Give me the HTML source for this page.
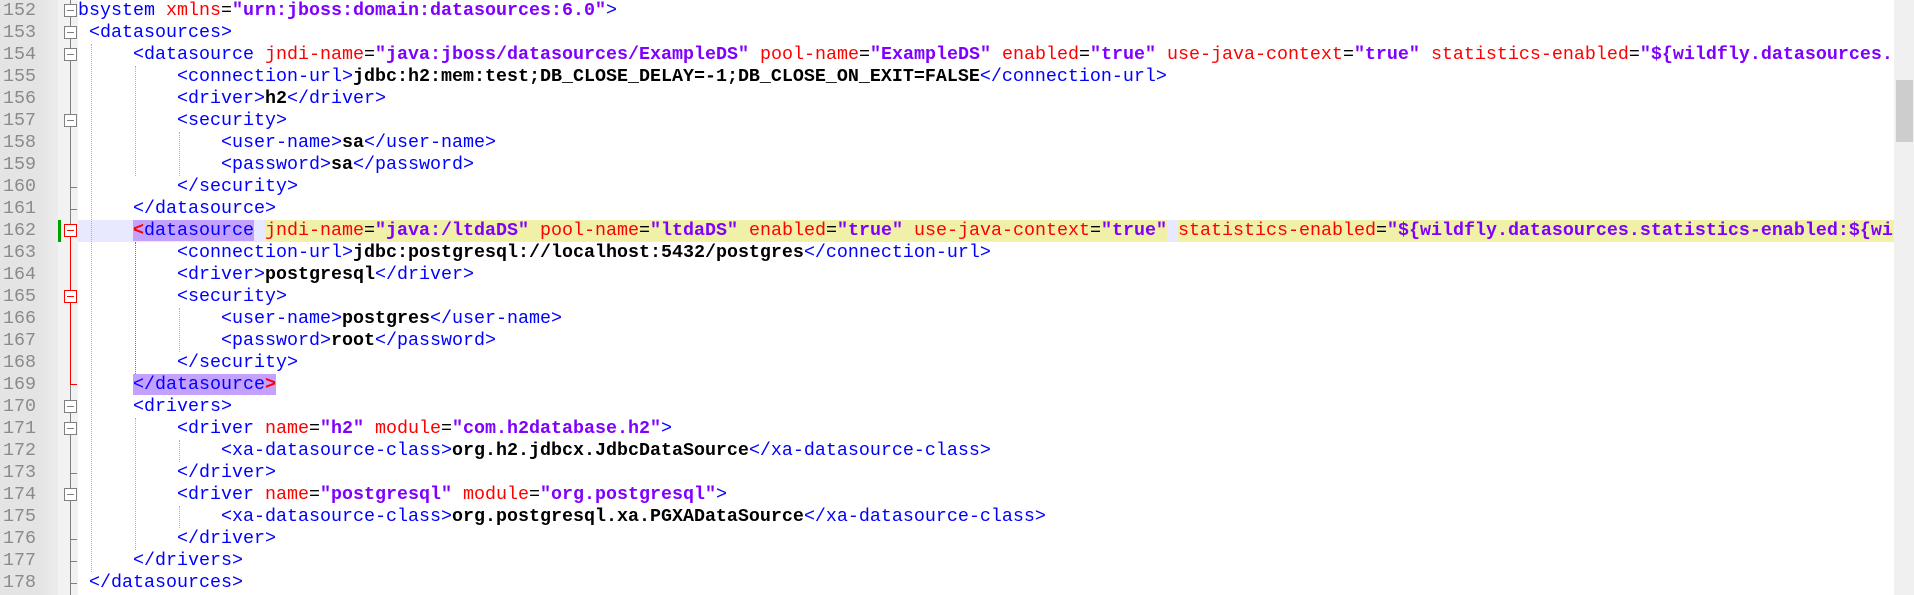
<!DOCTYPE html>
<html><head><meta charset="utf-8"><style>
*{margin:0;padding:0;box-sizing:border-box}
body{width:1914px;height:595px;overflow:hidden;background:#fff;position:relative;font-family:"Liberation Mono",monospace;font-size:18.33px}
.gut{position:absolute;left:0;top:0;width:58px;height:595px;background:linear-gradient(90deg,#e4e4e4 0,#e4e4e4 38px,#ececec 58px)}
.fm{position:absolute;left:58px;top:0;width:20px;height:595px;background:#f2f2f2}
.ln{position:absolute;left:0;width:36px;text-align:right;color:#8a8a8a;height:22px;line-height:22px}
.row{position:absolute;left:78px;right:20px;height:22px;line-height:22px;white-space:pre;color:#000}
.t{color:#0000ff}.a{color:#ff0000}.v{color:#8000ff;font-weight:bold}.b{font-weight:bold}
.box{position:absolute;left:64px;width:13px;height:13px;border:1px solid #808080;background:#fff}
.box:after{content:"";position:absolute;left:2px;right:2px;top:5px;height:1px;background:#808080}
.box.r{border-color:#ff0000}.box.r:after{background:#ff0000}
.vl{position:absolute;left:70px;width:1px;background:#808080}
.tick{position:absolute;left:70px;width:7px;height:1px;background:#808080}
.ig{position:absolute;width:0;border-left:1px dotted #b0b0b0}
.sb{position:absolute;right:0;top:0;width:20px;height:595px;background:#f0f0f0}
.th{position:absolute;right:1px;top:80px;width:17px;height:62px;background:#cdcdcd}
.y{background:#f0f0a8}.p{background:#c4a0ff}
</style></head><body>
<div class="gut"></div><div class="fm"></div>
<div style="position:absolute;left:78px;right:20px;top:220px;height:22px;background:#e8e8ff"></div>
<div style="position:absolute;left:58px;top:220px;width:3px;height:22px;background:#00a000"></div>

<div class="ln" style="top:0">152</div><div class="ln" style="top:22px">153</div><div class="ln" style="top:44px">154</div><div class="ln" style="top:66px">155</div><div class="ln" style="top:88px">156</div><div class="ln" style="top:110px">157</div><div class="ln" style="top:132px">158</div><div class="ln" style="top:154px">159</div><div class="ln" style="top:176px">160</div><div class="ln" style="top:198px">161</div><div class="ln" style="top:220px">162</div><div class="ln" style="top:242px">163</div><div class="ln" style="top:264px">164</div><div class="ln" style="top:286px">165</div><div class="ln" style="top:308px">166</div><div class="ln" style="top:330px">167</div><div class="ln" style="top:352px">168</div><div class="ln" style="top:374px">169</div><div class="ln" style="top:396px">170</div><div class="ln" style="top:418px">171</div><div class="ln" style="top:440px">172</div><div class="ln" style="top:462px">173</div><div class="ln" style="top:484px">174</div><div class="ln" style="top:506px">175</div><div class="ln" style="top:528px">176</div><div class="ln" style="top:550px">177</div><div class="ln" style="top:572px">178</div>

<div class="vl" style="top:0;height:595px"></div>
<div class="vl" style="top:237px;height:148px;background:#ff0000"></div>
<div class="tick" style="top:187px"></div>
<div class="tick" style="top:209px"></div>
<div class="tick" style="top:384px;background:#ff0000"></div>
<div class="tick" style="top:473px"></div><div class="tick" style="top:539px"></div><div class="tick" style="top:561px"></div><div class="tick" style="top:583px"></div>
<div class="box" style="top:4px"></div><div class="box" style="top:26px"></div><div class="box" style="top:48px"></div><div class="box" style="top:114px"></div><div class="box r" style="top:224px"></div><div class="box r" style="top:290px"></div><div class="box" style="top:400px"></div><div class="box" style="top:422px"></div><div class="box" style="top:488px"></div>

<div class="ig" style="left:91px;top:44px;height:528px"></div>
<div class="ig" style="left:135px;top:66px;height:110px"></div>
<div class="ig" style="left:135px;top:242px;height:132px;border-left-color:#ff4040"></div>
<div class="ig" style="left:179px;top:132px;height:44px"></div>
<div class="ig" style="left:179px;top:308px;height:44px"></div>
<div class="ig" style="left:135px;top:418px;height:132px"></div>
<div class="ig" style="left:179px;top:440px;height:22px"></div>
<div class="ig" style="left:179px;top:506px;height:22px"></div>

<div class="row" style="top:0"><span class="t">bsystem </span><span class="a">xmlns</span>=<span class="v">"urn:jboss:domain:datasources:6.0"</span><span class="t">&gt;</span></div>
<div class="row" style="top:22px"> <span class="t">&lt;datasources&gt;</span></div>
<div class="row" style="top:44px">     <span class="t">&lt;datasource </span><span class="a">jndi-name</span>=<span class="v">"java:jboss/datasources/ExampleDS"</span> <span class="a">pool-name</span>=<span class="v">"ExampleDS"</span> <span class="a">enabled</span>=<span class="v">"true"</span> <span class="a">use-java-context</span>=<span class="v">"true"</span> <span class="a">statistics-enabled</span>=<span class="v">"${wildfly.datasources.</span></div>
<div class="row" style="top:66px">         <span class="t">&lt;connection-url&gt;</span><span class="b">jdbc:h2:mem:test;DB_CLOSE_DELAY=-1;DB_CLOSE_ON_EXIT=FALSE</span><span class="t">&lt;/connection-url&gt;</span></div>
<div class="row" style="top:88px">         <span class="t">&lt;driver&gt;</span><span class="b">h2</span><span class="t">&lt;/driver&gt;</span></div>
<div class="row" style="top:110px">         <span class="t">&lt;security&gt;</span></div>
<div class="row" style="top:132px">             <span class="t">&lt;user-name&gt;</span><span class="b">sa</span><span class="t">&lt;/user-name&gt;</span></div>
<div class="row" style="top:154px">             <span class="t">&lt;password&gt;</span><span class="b">sa</span><span class="t">&lt;/password&gt;</span></div>
<div class="row" style="top:176px">         <span class="t">&lt;/security&gt;</span></div>
<div class="row" style="top:198px">     <span class="t">&lt;/datasource&gt;</span></div>
<div class="row" style="top:220px">     <span class="p"><span style="color:#ff0000;font-weight:bold">&lt;</span><span class="t">datasource</span></span> <span class="y"><span class="a">jndi-name</span>=<span class="v">"java:/ltdaDS"</span> <span class="a">pool-name</span>=<span class="v">"ltdaDS"</span> <span class="a">enabled</span>=<span class="v">"true"</span> <span class="a">use-java-context</span>=<span class="v">"true"</span></span> <span class="y"><span class="a">statistics-enabled</span>=<span class="v">"${wildfly.datasources.statistics-enabled:${wi</span></span></div>
<div class="row" style="top:242px">         <span class="t">&lt;connection-url&gt;</span><span class="b">jdbc:postgresql://localhost:5432/postgres</span><span class="t">&lt;/connection-url&gt;</span></div>
<div class="row" style="top:264px">         <span class="t">&lt;driver&gt;</span><span class="b">postgresql</span><span class="t">&lt;/driver&gt;</span></div>
<div class="row" style="top:286px">         <span class="t">&lt;security&gt;</span></div>
<div class="row" style="top:308px">             <span class="t">&lt;user-name&gt;</span><span class="b">postgres</span><span class="t">&lt;/user-name&gt;</span></div>
<div class="row" style="top:330px">             <span class="t">&lt;password&gt;</span><span class="b">root</span><span class="t">&lt;/password&gt;</span></div>
<div class="row" style="top:352px">         <span class="t">&lt;/security&gt;</span></div>
<div class="row" style="top:374px">     <span class="p"><span class="t">&lt;/datasource</span><span style="color:#ff0000;font-weight:bold">&gt;</span></span></div>
<div class="row" style="top:396px">     <span class="t">&lt;drivers&gt;</span></div>
<div class="row" style="top:418px">         <span class="t">&lt;driver </span><span class="a">name</span>=<span class="v">"h2"</span> <span class="a">module</span>=<span class="v">"com.h2database.h2"</span><span class="t">&gt;</span></div>
<div class="row" style="top:440px">             <span class="t">&lt;xa-datasource-class&gt;</span><span class="b">org.h2.jdbcx.JdbcDataSource</span><span class="t">&lt;/xa-datasource-class&gt;</span></div>
<div class="row" style="top:462px">         <span class="t">&lt;/driver&gt;</span></div>
<div class="row" style="top:484px">         <span class="t">&lt;driver </span><span class="a">name</span>=<span class="v">"postgresql"</span> <span class="a">module</span>=<span class="v">"org.postgresql"</span><span class="t">&gt;</span></div>
<div class="row" style="top:506px">             <span class="t">&lt;xa-datasource-class&gt;</span><span class="b">org.postgresql.xa.PGXADataSource</span><span class="t">&lt;/xa-datasource-class&gt;</span></div>
<div class="row" style="top:528px">         <span class="t">&lt;/driver&gt;</span></div>
<div class="row" style="top:550px">     <span class="t">&lt;/drivers&gt;</span></div>
<div class="row" style="top:572px"> <span class="t">&lt;/datasources&gt;</span></div>

<div class="sb"><div class="th"></div></div>
</body></html>
